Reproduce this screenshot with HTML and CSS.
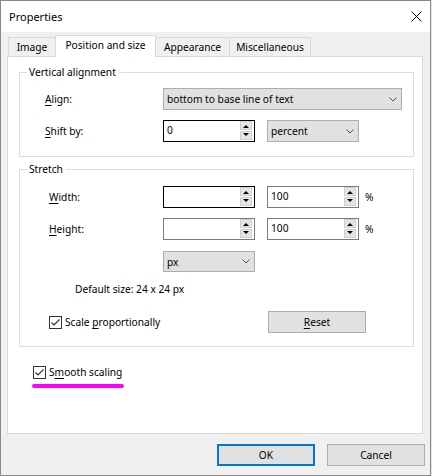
FILE: index.html
```html
<!DOCTYPE html>
<html>
<head>
<meta charset="utf-8">
<title>Properties</title>
<link rel="stylesheet" href="styles.css">
</head>
<body>
<div class="window">
  <div class="titlebar">
    <span class="title">Properties</span>
    <svg class="close" width="11" height="11" viewBox="0 0 11 11"><path d="M0.5 0.5L10.5 10.5M10.5 0.5L0.5 10.5" stroke="#000" stroke-width="1"/></svg>
  </div>
  <div class="main">
    <div class="tabs">
      <div class="tab t-image">Image</div>
      <div class="tab t-pos active">Position and size</div>
      <div class="tab t-app">Appearance</div>
      <div class="tab t-misc">Miscellaneous</div>
    </div>
    <div class="panel">
      <fieldset class="group g1">
        <legend>Vertical alignment</legend>
        <div class="row">
          <span class="lbl"><u>A</u>lign:</span>
          <div class="select sel-wide"><span class="val">bottom to base line of text</span><span class="chev"><svg width="8" height="5" viewBox="0 0 8 5"><path d="M0.5 0.5L4 4L7.5 0.5" fill="none" stroke="#555"/></svg></span></div>
        </div>
        <div class="row">
          <span class="lbl"><u>S</u>hift by:</span>
          <div class="spin focus"><span class="val">0</span><svg class="spinbtn" width="12" height="19" viewBox="0 0 12 19"><rect x="0.5" y="0.5" width="11" height="8" fill="#e5e5e5" stroke="#cfcfcf"/><rect x="0.5" y="10.5" width="11" height="8" fill="#e5e5e5" stroke="#cfcfcf"/><path d="M3 7H9L6 4Z" fill="#000"/><path d="M3 12H9L6 15Z" fill="#000"/></svg></div>
          <div class="select sel-unit"><span class="val">percent</span><span class="chev"><svg width="8" height="5" viewBox="0 0 8 5"><path d="M0.5 0.5L4 4L7.5 0.5" fill="none" stroke="#555"/></svg></span></div>
        </div>
      </fieldset>

      <fieldset class="group g2">
        <legend>Stretch</legend>
        <div class="row r-width">
          <span class="lbl"><u>W</u>idth:</span>
          <div class="spin focus"><span class="val"></span><svg class="spinbtn" width="12" height="19" viewBox="0 0 12 19"><rect x="0.5" y="0.5" width="11" height="8" fill="#e5e5e5" stroke="#cfcfcf"/><rect x="0.5" y="10.5" width="11" height="8" fill="#e5e5e5" stroke="#cfcfcf"/><path d="M3 7H9L6 4Z" fill="#000"/><path d="M3 12H9L6 15Z" fill="#000"/></svg></div>
          <div class="spin spin-pct"><span class="val">100</span><svg class="spinbtn" width="12" height="19" viewBox="0 0 12 19"><rect x="0.5" y="0.5" width="11" height="8" fill="#e5e5e5" stroke="#cfcfcf"/><rect x="0.5" y="10.5" width="11" height="8" fill="#e5e5e5" stroke="#cfcfcf"/><path d="M3 7H9L6 4Z" fill="#000"/><path d="M3 12H9L6 15Z" fill="#000"/></svg></div>
          <span class="pct">%</span>
        </div>
        <div class="row r-height">
          <span class="lbl"><u>H</u>eight:</span>
          <div class="spin"><span class="val"></span><svg class="spinbtn" width="12" height="19" viewBox="0 0 12 19"><rect x="0.5" y="0.5" width="11" height="8" fill="#e5e5e5" stroke="#cfcfcf"/><rect x="0.5" y="10.5" width="11" height="8" fill="#e5e5e5" stroke="#cfcfcf"/><path d="M3 7H9L6 4Z" fill="#000"/><path d="M3 12H9L6 15Z" fill="#000"/></svg></div>
          <div class="spin spin-pct"><span class="val">100</span><svg class="spinbtn" width="12" height="19" viewBox="0 0 12 19"><rect x="0.5" y="0.5" width="11" height="8" fill="#e5e5e5" stroke="#cfcfcf"/><rect x="0.5" y="10.5" width="11" height="8" fill="#e5e5e5" stroke="#cfcfcf"/><path d="M3 7H9L6 4Z" fill="#000"/><path d="M3 12H9L6 15Z" fill="#000"/></svg></div>
          <span class="pct">%</span>
        </div>
        <div class="row r-px">
          <span class="lbl"></span>
          <div class="select sel-px"><span class="val">px</span><span class="chev"><svg width="8" height="5" viewBox="0 0 8 5"><path d="M0.5 0.5L4 4L7.5 0.5" fill="none" stroke="#555"/></svg></span></div>
        </div>
        <div class="default-size">Default size: 24 x 24 px</div>
        <div class="row r-scale">
          <label class="check scale-check"><svg class="cb" width="13" height="13" viewBox="0 0 13 13"><rect x="0.5" y="0.5" width="12" height="12" fill="#fff" stroke="#333"/><path d="M2.5 6.5L5 9L10.5 3.5" fill="none" stroke="#333" stroke-width="1.2"/></svg><span>Scale <u>p</u>roportionally</span></label>
          <div class="btn reset"><u>R</u>eset</div>
        </div>
      </fieldset>

      <label class="check smooth"><svg class="cb" width="13" height="13" viewBox="0 0 13 13"><rect x="0.5" y="0.5" width="12" height="12" fill="#fff" stroke="#333"/><path d="M2.5 6.5L5 9L10.5 3.5" fill="none" stroke="#333" stroke-width="1.2"/></svg><span>S<u>m</u>ooth scaling</span></label>
      <div class="highlight"></div>
    </div>
    <div class="buttons">
      <div class="btn ok">OK</div>
      <div class="btn">Cancel</div>
    </div>
  </div>
</div>
</body>
</html>
```
FILE: styles.css
```css
* { box-sizing: border-box; }
html, body { margin: 0; padding: 0; }
body {
  width: 432px;
  height: 476px;
  overflow: hidden;
  background: #e6e6e6;
  font-family: "Noto Sans", "Open Sans", sans-serif;
  font-size: 10.2px;
  color: #000;
}
u { text-decoration: underline; text-underline-offset: 2px; }

.window {
  width: 431px;
  height: 476px;
  border: 1px solid #888;
  background: #f0f0f0;
  display: flex;
  flex-direction: column;
}
.titlebar {
  flex: none;
  height: 31px;
  background: #fff;
  display: flex;
  align-items: center;
  justify-content: space-between;
  padding: 0 8px 0 8px;
  font-size: 11px;
}
.close { display: block; }

.main {
  flex: 1;
  display: flex;
  flex-direction: column;
  padding: 3px 7px 0 6px;
  min-height: 0;
}
.tabs {
  flex: none;
  height: 21px;
  display: flex;
  align-items: flex-end;
  padding-left: 1px;
}
.tab {
  height: 19px;
  border: 1px solid #d9d9d9;
  border-bottom: none;
  background: #f0f0f0;
  text-align: center;
  line-height: 16px;
  padding-top: 1px;
  margin-left: -1px;
  white-space: nowrap;
}
.tab:first-child { margin-left: 0; }
.tab.active {
  height: 22px;
  background: #fff;
  position: relative;
  z-index: 1;
  margin-bottom: -1px;
}
.t-image { width: 48px; }
.t-pos { width: 101px; }
.t-app { width: 75px; }
.t-misc { width: 82px; }

.panel {
  flex: 1;
  min-height: 0;
  background: #fff;
  border: 1px solid #d9d9d9;
  padding: 8px 8px 0 11px;
  display: flex;
  flex-direction: column;
}

.group {
  margin: 0;
  min-width: 0;
  border: 1px solid #dcdcdc;
}
.group legend {
  margin-left: 7px;
  padding: 0 3px 0 2px;
  line-height: 15px;
}
.g1 { padding: 8px 0 14px 0; }
.g2 { padding: 9px 0 13px 0; margin-top: 5px; }

.row {
  display: flex;
  align-items: center;
  height: 22px;
}
.g1 .row { padding-left: 25px; }
.g1 .lbl { width: 118px; }
.g1 .row + .row { margin-top: 10px; }
.g2 .row { padding-left: 29px; }
.g2 .lbl { width: 114px; }
.r-height { margin-top: 10px; }
.r-px { margin-top: 11px; height: 21px; }

.select {
  display: flex;
  align-items: center;
  height: 22px;
  border: 1px solid #adadad;
  background: #e1e1e1;
  padding-left: 3px;
}
.select .val { flex: 1; white-space: nowrap; }
.chev {
  width: 17px;
  display: flex;
  justify-content: center;
  align-items: center;
}
.chev svg { display: block; }
.sel-wide { width: 239px; }
.sel-unit { width: 92px; margin-left: 12px; }
.sel-px { width: 92px; height: 21px; }

.spin {
  width: 92px;
  height: 22px;
  border: 1px solid #7a7a7a;
  background: #fff;
  display: flex;
  align-items: flex-start;
  padding: 0 2px 0 3px;
}
.spin.focus { border-color: #000; }
.spin .val { flex: 1; line-height: 18px; }
.spinbtn { display: block; }
.spin-pct { margin-left: 12px; }
.pct { margin-left: 6px; }

.default-size {
  margin-top: 9px;
  padding-left: 55px;
  line-height: 16px;
}
.r-scale { margin-top: 14px; }

.check {
  display: flex;
  align-items: center;
  line-height: 16px;
}
.check .cb { display: block; flex: none; margin-right: 3px; }
.scale-check { width: 219px; }

.btn {
  width: 98px;
  height: 22px;
  border: 1px solid #adadad;
  background: #e1e1e1;
  display: flex;
  align-items: center;
  justify-content: center;
}
.btn.ok { border: 2px solid #0078d7; }

.smooth { margin-top: 17px; margin-left: 14px; align-self: flex-start; }
.highlight {
  width: 92px;
  height: 4px;
  margin-top: 4px;
  margin-left: 13px;
  background: #ff00ff;
  border-radius: 2px;
}

.buttons {
  flex: none;
  display: flex;
  justify-content: flex-end;
  gap: 12px;
  margin: 10px -2px 9px 0;
}
```
